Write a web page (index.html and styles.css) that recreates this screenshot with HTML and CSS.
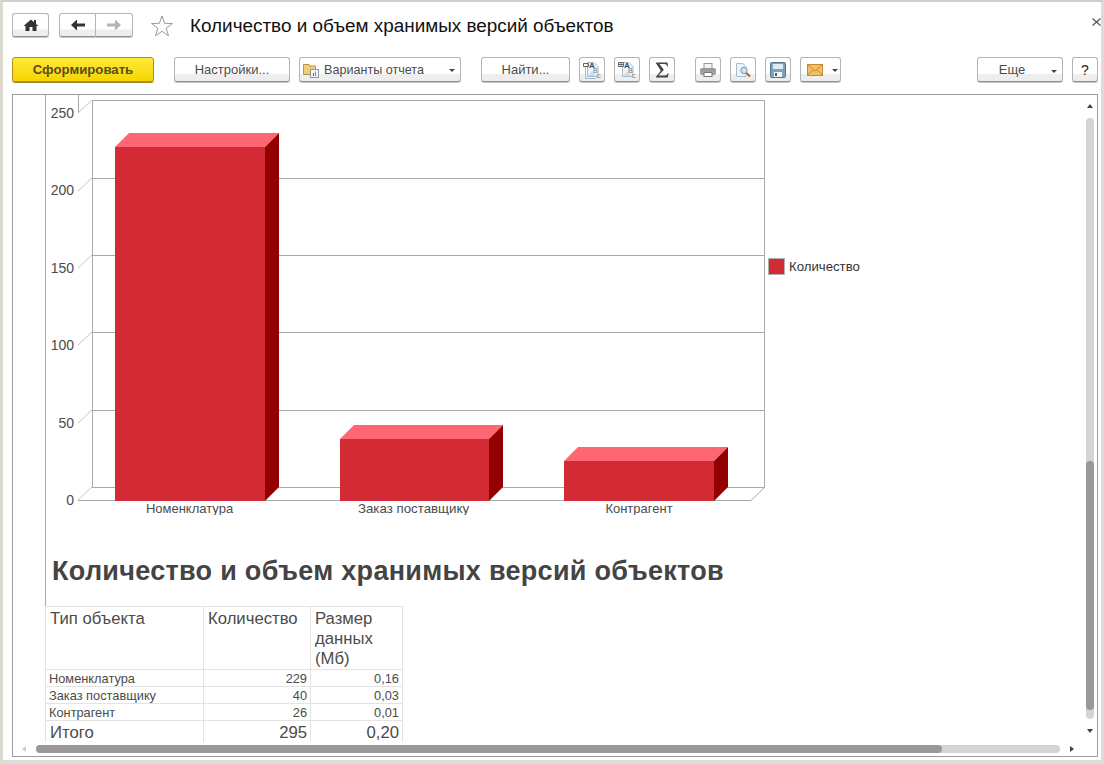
FILE: index.html
```html
<!DOCTYPE html>
<html lang="ru">
<head>
  <meta charset="utf-8">
  <title>Количество и объем хранимых версий объектов</title>
  <link rel="stylesheet" href="styles.css">
</head>
<body>
  <div class="window">
    <header class="title-bar">
      <button class="btn btn-home">
        <svg width="16" height="14" viewBox="0 0 16 14"><path d="M8 1.500 L11 4.200 V2 H13 V6 L15.500 8 H13.500 V13 H9.500 V9 H6.500 V13 H2.500 V8 H.5 Z" fill="#333"/></svg>
      </button>
      <div class="nav-group">
        <button class="btn btn-nav">
          <svg width="16" height="12" viewBox="0 0 16 12"><path d="M1 6 L7 .5 V4.500 H15 V7.500 H7 V11.500 Z" fill="#333"/></svg>
        </button>
        <button class="btn btn-nav">
          <svg width="16" height="12" viewBox="0 0 16 12"><path d="M15 6 L9 .5 V4.500 H1 V7.500 H9 V11.500 Z" fill="#b4b4b4"/></svg>
        </button>
      </div>
      <svg class="star" width="24" height="24" viewBox="0 0 24 24"><path d="M12 2 L14.600 9.300 L22.500 9.500 L16.200 14.200 L18.500 21.800 L12 17.300 L5.500 21.800 L7.800 14.200 L1.500 9.500 L9.400 9.300 Z" fill="#fff" stroke="#9a9a9a" stroke-width="1"/></svg>
      <h1>Количество и объем хранимых версий объектов</h1>
      <svg class="close" width="9" height="8" viewBox="0 0 9 8"><path d="M.5 .5 L8.500 7.500 M8.500 .5 L.5 7.500" stroke="#555" stroke-width="1.200"/></svg>
    </header>

    <nav class="toolbar">
      <button class="btn btn-primary">Сформировать</button>
      <button class="btn btn-settings">Настройки...</button>
      <button class="btn btn-variants">
        <svg width="16" height="16" viewBox="0 0 16 16"><path d="M.5 2.500 H6 L7 4 H12.500 V12.500 H.5 Z" fill="#f0cf7c" stroke="#b9924a"/><rect x="7.500" y="7.500" width="8" height="8" fill="#f4f6f8" stroke="#8f9aa6"/><rect x="10" y="11" width="1" height="3" fill="#c33"/><rect x="12" y="9.500" width="1" height="4.500" fill="#49a"/></svg>
        <span>Варианты отчета</span>
        <i class="caret"></i>
      </button>
      <button class="btn btn-find">Найти...</button>
      <button class="btn btn-icon">
        <svg class="glyph-doc" width="20" height="20" viewBox="0 0 20 20"><path d="M5.500 2.500 H12 L16 6.500 V16.500 H5.500 Z" fill="#eef4f9" stroke="#a9bccb"/><path d="M3.500 7 V18.500 H14" fill="none" stroke="#a9bccb"/><path d="M6 16 L10 11 L14 16 Z" fill="#c5dff0"/><path d="M1.500 3.500 H6.500 M1.500 6.500 H6.500 M1.500 3.500 V6.500 M6.500 3.500 V6.500" stroke="#666" fill="none"/><text class="glyph-a" x="7" y="8">A</text><text class="glyph-b" x="11" y="13">B</text><text class="glyph-c" x="14.500" y="18">C</text></svg>
      </button>
      <button class="btn btn-icon">
        <svg class="glyph-doc" width="20" height="20" viewBox="0 0 20 20"><path d="M5.500 2.500 H12 L16 6.500 V16.500 H5.500 Z" fill="#eef4f9" stroke="#a9bccb"/><path d="M6 16 L10 11 L14 16 Z" fill="#c5dff0"/><path d="M1.500 2.500 H6.500 V6.500 H1.500 Z M4 2.500 V6.500 M1.500 4.500 H6.500" stroke="#666" fill="#fff"/><text class="glyph-a" x="7" y="8">A</text><text class="glyph-b" x="11" y="13">B</text><text class="glyph-c" x="14.500" y="18">C</text></svg>
      </button>
      <button class="btn btn-icon">
        <svg width="14" height="16" viewBox="0 0 14 16"><path d="M1 .5 H12.500 L13 4.500 H12.200 C11.800 2.800 11 2 9 2 H4.500 L8.800 7.800 L3.500 13.500 H10 C11.800 13.500 12.400 12.700 12.900 11 H13.600 L12.800 15.500 H1 V14.700 L5.800 8.800 L1 1.300 Z" fill="#444"/></svg>
      </button>
      <button class="btn btn-icon btn-print">
        <svg width="18" height="16" viewBox="0 0 18 16"><rect x="5" y="1.500" width="8" height="5" fill="#f4f4f4" stroke="#999"/><rect x="1" y="6" width="16" height="7" rx="2" fill="#9a9a9a"/><rect x="1" y="9.500" width="16" height="2" fill="#c9a27c"/><rect x="5" y="10.500" width="8" height="4" fill="#fff" stroke="#777"/></svg>
      </button>
      <button class="btn btn-icon">
        <svg width="16" height="16" viewBox="0 0 16 16"><path d="M1.500 1.500 H8 L11 4.500 V14.500 H1.500 Z" fill="#eef4f9" stroke="#a9bccb"/><circle cx="9" cy="8.500" r="3.200" fill="#cfe3f2" stroke="#7c93a6"/><path d="M11.500 11 L15 14.500" stroke="#b5651d" stroke-width="2"/></svg>
      </button>
      <button class="btn btn-icon">
        <svg width="16" height="16" viewBox="0 0 16 16"><rect x=".5" y=".5" width="15" height="15" rx="1" fill="#7fa3bb" stroke="#4f7690"/><rect x="3" y="2" width="10" height="5" fill="#dfeaf1"/><rect x="4" y="10" width="8" height="5" fill="#f4f7f9"/><rect x="5" y="11" width="2" height="3" fill="#3f6580"/></svg>
      </button>
      <button class="btn btn-mail">
        <svg width="16" height="12" viewBox="0 0 16 12"><rect x=".5" y=".5" width="15" height="11" fill="#f2c069" stroke="#c98a2e"/><path d="M.5 .5 L8 7 L15.500 .5 M.5 11.500 L6 5.500 M15.500 11.500 L10 5.500" fill="none" stroke="#c98a2e"/></svg>
        <i class="caret"></i>
      </button>
      <button class="btn btn-more"><span>Еще</span><i class="caret"></i></button>
      <button class="btn btn-help">?</button>
    </nav>

    <main class="report">
      <div class="report-body">
        <svg class="chart" width="860" height="420" viewBox="46 95 860 420">
          <g class="grid">
            <path d="M92.500 100.500 H764.500 V487.500 H92.500 Z M78.500 95 V113 M78 500.500 H751 L764.500 487.500"/>
            <path d="M92.500 178.500 H764 M92.500 255.500 H764 M92.500 332.500 H764 M92.500 410.500 H764"/>
            <path class="tick" d="M78 113 L92 100 M78 191 L92 178 M78 268 L92 255 M78 345 L92 332 M78 423 L92 410 M78 500 L92 487"/>
          </g>
          <g class="bar">
            <path class="bar-top" d="M115 147 L129 133 H279 L265 147 Z"/>
            <path class="bar-side" d="M265 147 L279 133 V487 L265 501 Z"/>
            <rect class="bar-front" x="115" y="147" width="150" height="354"/>
          </g>
          <g class="bar">
            <path class="bar-top" d="M340 439 L354 425 H503 L489 439 Z"/>
            <path class="bar-side" d="M489 439 L503 425 V487 L489 501 Z"/>
            <rect class="bar-front" x="340" y="439" width="149" height="62"/>
          </g>
          <g class="bar">
            <path class="bar-top" d="M564 461 L578 447 H728 L714 461 Z"/>
            <path class="bar-side" d="M714 461 L728 447 V487 L714 501 Z"/>
            <rect class="bar-front" x="564" y="461" width="150" height="40"/>
          </g>
          <g class="axis-y">
            <text x="74" y="118">250</text>
            <text x="74" y="195">200</text>
            <text x="74" y="273">150</text>
            <text x="74" y="350">100</text>
            <text x="74" y="428">50</text>
            <text x="74" y="505">0</text>
          </g>
          <g class="axis-x">
            <text x="189.500" y="513">Номенклатура</text>
            <text class="axis-long" x="413.500" y="513">Заказ поставщику</text>
            <text x="639" y="513">Контрагент</text>
          </g>
          <rect class="legend-box" x="768.500" y="258.500" width="16" height="16"/>
          <text class="legend-text" x="789" y="271">Количество</text>
        </svg>

        <h2>Количество и объем хранимых версий объектов</h2>

        <table class="data">
          <thead>
            <tr>
              <th class="col-type">Тип объекта</th>
              <th class="col-count">Количество</th>
              <th class="col-size">Размер данных (Мб)</th>
            </tr>
          </thead>
          <tbody>
            <tr><td>Номенклатура</td><td class="num">229</td><td class="num">0,16</td></tr>
            <tr><td>Заказ поставщику</td><td class="num">40</td><td class="num">0,03</td></tr>
            <tr><td>Контрагент</td><td class="num">26</td><td class="num">0,01</td></tr>
          </tbody>
          <tfoot>
            <tr><td>Итого</td><td class="num">295</td><td class="num">0,20</td></tr>
          </tfoot>
        </table>
      </div>

      <div class="scroll-v">
        <i class="arrow-up"></i>
        <div class="track-v"><div class="thumb-v"></div></div>
        <i class="arrow-down"></i>
      </div>
      <div class="scroll-h">
        <i class="arrow-left"></i>
        <div class="track-h"><div class="thumb-h"></div></div>
        <i class="arrow-right"></i>
      </div>
    </main>
  </div>
</body>
</html>
```

FILE: styles.css
```css
:root {
  --text: #4b4b4b;
  --line: #a9a9a9;
  --cell-line: #e3e3e3;
}
* {
  box-sizing: border-box;
}
html, body {
  height: 100%;
}
body {
  margin: 0;
  overflow: hidden;
  background-color: #fff;
  font-family: "Liberation Sans", Arial, sans-serif;
  color: var(--text);
}
.window {
  height: 764px;
  display: flex;
  flex-direction: column;
  border-top: 2px solid #cfcfcf;
  border-left: 3px solid #dbd8cf;
  border-right: 3px solid #dcdcdc;
  border-bottom: 4px solid #dcdcdc;
  padding: 0 3px 3px 9px;
}
.btn {
  margin: 0;
  padding: 0;
  height: 25px;
  border: 1px solid #b4b4b4;
  border-bottom-color: #8f8f8f;
  border-radius: 3px;
  background: linear-gradient(#fff 0, #fff 70%, #eeeeee 71%, #eeeeee 100%);
  box-shadow: 0 1px 0 #c8c8c8;
  font-family: inherit;
  font-size: 13px;
  color: var(--text);
  display: flex;
  align-items: center;
  justify-content: center;
  flex: none;
}

/* title row */
.title-bar {
  height: 34px;
  margin-top: 11px;
  display: flex;
  align-items: flex-start;
}
.title-bar .btn {
  height: 24px;
}
.btn-home {
  width: 37px;
}
.nav-group {
  margin-left: 10px;
  display: flex;
}
.btn-nav {
  width: 37px;
  border-radius: 3px 0 0 3px;
}
.btn-nav + .btn-nav {
  border-left: none;
  border-radius: 0 3px 3px 0;
}
.star {
  margin-left: 17px;
  margin-top: 1px;
  flex: none;
}
.title-bar h1 {
  margin: 1px 0 0 16px;
  font-size: 18.9px;
  line-height: 24px;
  font-weight: normal;
  color: #111;
  flex: 1;
}
.close {
  margin-top: 5px;
  margin-right: -3px;
  flex: none;
}

/* toolbar */
.toolbar {
  height: 37px;
  margin-top: 10px;
  display: flex;
  align-items: flex-start;
}
.btn-primary {
  width: 142px;
  border-color: #b08d1e;
  background: linear-gradient(#ffe93a, #f6d500);
  box-shadow: 0 1px 0 #a58a28;
  font-size: 13.2px;
  font-weight: bold;
  color: #5b4e1a;
}
.btn-settings {
  width: 116px;
  margin-left: 20px;
}
.btn-variants {
  width: 162px;
  margin-left: 9px;
  justify-content: flex-start;
  padding-left: 3px;
  font-size: 12.6px;
  position: relative;
}
.btn-variants span {
  margin-left: 5px;
}
.btn-find {
  width: 89px;
  margin-left: 20px;
}
.btn-icon {
  width: 26px;
  margin-left: 9px;
}
.btn-print {
  margin-left: 20px;
}
.btn-mail {
  width: 41px;
  margin-left: 9px;
  justify-content: flex-start;
  padding-left: 6px;
}
.btn-more {
  width: 86px;
  margin-left: auto;
  position: relative;
}
.btn-help {
  width: 26px;
  margin-left: 9px;
  font-size: 14px;
  color: #222;
}
.caret {
  display: block;
  width: 0;
  height: 0;
  border-left: 3px solid transparent;
  border-right: 3px solid transparent;
  border-top: 3px solid #444;
}
.btn-variants .caret {
  position: absolute;
  right: 5px;
  top: 11px;
}
.btn-mail .caret {
  margin-left: 9px;
  margin-top: 2px;
}
.btn-more .caret {
  position: absolute;
  right: 5px;
  top: 12px;
}
.btn-more span {
  margin-right: 16px;
}
.glyph-doc text {
  font-family: "Liberation Sans", Arial, sans-serif;
}
.glyph-a {
  font-size: 8px;
  font-weight: bold;
  fill: #1f4e79;
}
.glyph-b {
  font-size: 7px;
  fill: #777;
}
.glyph-c {
  font-size: 6px;
  fill: #777;
}

/* report area */
.report {
  flex: 1;
  min-height: 0;
  position: relative;
  border: 1px solid #9c9c9c;
  overflow: hidden;
}
.report-body {
  height: 100%;
  margin-left: 32px;
  border-left: 1px solid var(--line);
}
.chart {
  display: block;
}
.grid path {
  fill: none;
  stroke: var(--line);
  stroke-width: 1;
}
.grid .tick {
  stroke: #c4c4c4;
}
.bar-top {
  fill: #ff6673;
}
.bar-side {
  fill: #930000;
}
.bar-front {
  fill: #d22b36;
}
.axis-y text {
  font-size: 14px;
  fill: var(--text);
  text-anchor: end;
}
.axis-x text {
  font-size: 13px;
  fill: var(--text);
  text-anchor: middle;
}
.axis-x .axis-long {
  font-size: 13.3px;
}
.legend-box {
  fill: #d22b36;
  stroke: #b0b0b0;
}
.legend-text {
  font-size: 13.2px;
  fill: #333;
}
.report-body h2 {
  margin: 40px 0 0 6px;
  font-size: 27px;
  line-height: 32px;
  font-weight: bold;
  letter-spacing: 0.3px;
  color: #444;
}
.data {
  margin: 19px 0 0 -1px;
  border-collapse: collapse;
  table-layout: fixed;
  width: 358px;
}
.data th, .data td {
  border: 1px solid var(--cell-line);
  padding: 0 3px;
  font-weight: normal;
  vertical-align: top;
  overflow: hidden;
}
.data th {
  height: 63px;
  padding: 2px 4px 0;
  text-align: left;
  font-size: 16.7px;
  line-height: 20px;
}
.col-type {
  width: 158px;
}
.col-count {
  width: 107px;
}
.data tbody td {
  height: 17px;
  padding-top: 1px;
  font-size: 12.8px;
  line-height: 15px;
}
.data tfoot td {
  height: 22px;
  border-bottom: none;
  font-size: 16.7px;
  line-height: 21px;
  padding: 1px 3px 0 4px;
}
.data .num {
  text-align: right;
}

/* scrollbars sit over the report */
.scroll-v {
  position: absolute;
  top: 0;
  right: 0;
  bottom: 14px;
  width: 20px;
  background-color: #fff;
}
.track-v {
  position: absolute;
  top: 23px;
  left: 9px;
  width: 8px;
  height: 601px;
  border-radius: 4px;
  background-color: #d4d4d4;
}
.thumb-v {
  position: absolute;
  top: 343px;
  left: 0;
  width: 8px;
  height: 249px;
  border-radius: 4px;
  background-color: #999;
}
.arrow-up, .arrow-down {
  position: absolute;
  left: 10px;
  width: 0;
  height: 0;
  border-left: 3px solid transparent;
  border-right: 3px solid transparent;
}
.arrow-up {
  top: 9px;
  border-bottom: 4px solid #444;
}
.arrow-down {
  top: 634px;
  border-top: 4px solid #444;
}
.scroll-h {
  position: absolute;
  left: 0;
  right: 0;
  bottom: 0;
  height: 14px;
  background-color: #fff;
}
.track-h {
  position: absolute;
  top: 3px;
  left: 23px;
  width: 1024px;
  height: 8px;
  border-radius: 4px;
  background-color: #d4d4d4;
}
.thumb-h {
  width: 906px;
  height: 8px;
  border-radius: 4px;
  background-color: #999;
}
.arrow-left, .arrow-right {
  position: absolute;
  top: 4px;
  width: 0;
  height: 0;
  border-top: 3px solid transparent;
  border-bottom: 3px solid transparent;
}
.arrow-left {
  left: 9px;
  border-right: 4px solid #ccc;
}
.arrow-right {
  right: 23px;
  border-left: 4px solid #444;
}
```
